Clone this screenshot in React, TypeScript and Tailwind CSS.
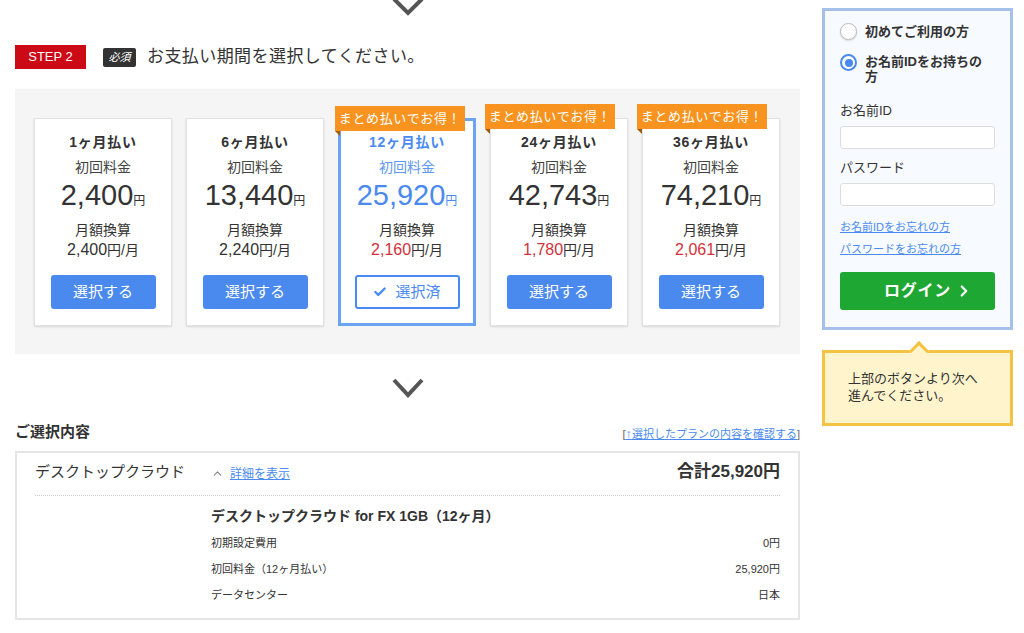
import { Check, ChevronRight, ChevronUp } from 'lucide-react';

type Plan = {
  title: string;
  price: string;
  monthly: string;
  promo?: boolean;
  selected?: boolean;
};

const plans: Plan[] = [
  { title: '1ヶ月払い', price: '2,400', monthly: '2,400' },
  { title: '6ヶ月払い', price: '13,440', monthly: '2,240' },
  { title: '12ヶ月払い', price: '25,920', monthly: '2,160', promo: true, selected: true },
  { title: '24ヶ月払い', price: '42,743', monthly: '1,780', promo: true },
  { title: '36ヶ月払い', price: '74,210', monthly: '2,061', promo: true },
];

function DownArrow({ cut }: { cut?: boolean }) {
  return (
    <div className="flex justify-center">
      <svg width="32" height={cut ? 16 : 20} viewBox={cut ? '0 0 32 16' : '0 0 32 20'}>
        <polyline
          points={cut ? '2,-1 16,13 30,-1' : '2,2 16,17 30,2'}
          fill="none"
          stroke="#555"
          strokeWidth="4"
        />
      </svg>
    </div>
  );
}

function PlanCard({ plan }: { plan: Plan }) {
  const sel = plan.selected;
  return (
    <div
      className={
        'relative w-[138px] h-[208px] bg-white flex flex-col items-center ' +
        (sel
          ? 'border-[3px] border-[#6ba3f3] pt-[11px]'
          : 'border border-[#e2e2e2] shadow-[0_1px_2px_rgba(0,0,0,0.12)] pt-[13px]')
      }
    >
      {plan.promo && (
        <div className="absolute top-[-15px] left-[-6px]">
          <div className="w-[130px] h-[25px] bg-[#f7931e] text-white text-[13px] leading-[25px] text-center tracking-wider">
            まとめ払いでお得！
          </div>
          <div className="w-0 h-0 border-t-[5px] border-t-[#a35a08] border-l-[5px] border-l-transparent" />
        </div>
      )}
      <div className={'text-[14px] leading-5 font-bold tracking-wider ' + (sel ? 'text-[#4a8af0]' : 'text-[#333]')}>
        {plan.title}
      </div>
      <div className={'mt-[5px] text-[14px] leading-5 ' + (sel ? 'text-[#5e98f2]' : 'text-[#444]')}>初回料金</div>
      <div className={'mt-[2px] leading-[32px] ' + (sel ? 'text-[#4a8af0]' : 'text-[#333]')}>
        <span className="text-[29px]">{plan.price}</span>
        <span className="text-[12px]">円</span>
      </div>
      <div className="mt-[3px] text-[14px] leading-5 text-[#333]">月額換算</div>
      <div className="text-[#333] leading-5">
        <span className={'text-[16px] ' + (sel || plan.promo ? 'text-[#d2323c]' : '')}>{plan.monthly}</span>
        <span className="text-[14px]">円/月</span>
      </div>
      {sel ? (
        <button className="mt-[15px] w-[105px] h-[34px] rounded-[3px] border-2 border-[#4a8af0] bg-white text-[#4a8af0] text-[15px] flex items-center justify-center gap-2">
          <Check size={14} strokeWidth={4} />
          選択済
        </button>
      ) : (
        <button className="mt-[15px] w-[105px] h-[34px] rounded-[3px] bg-[#4a89ee] text-white text-[15px]">選択する</button>
      )}
    </div>
  );
}

export default function App() {
  return (
    <div
      className="w-[1024px] h-[633px] overflow-hidden bg-white flex gap-[22px] pl-[15px] text-[#333]"
      style={{ fontFamily: '"Liberation Sans", "Noto Sans CJK JP", sans-serif' }}
    >
      {/* main column */}
      <div className="w-[785px] flex flex-col">
        <DownArrow cut />
        <div className="mt-[29px] flex items-center h-[24px]">
          <div className="w-[71px] h-[24px] bg-[#cc0a16] text-white text-[13px] leading-[24px] text-center">STEP 2</div>
          <div className="ml-[17px] w-[33px] h-[19px] bg-[#333] text-white text-[11px] leading-[19px] text-center rounded-[2px] italic">
            必須
          </div>
          <div className="ml-[11px] text-[17px] tracking-wide text-[#333]">お支払い期間を選択してください。</div>
        </div>
        <div className="mt-[20px] h-[265px] bg-[#f5f5f5] pl-[19px] pt-[29px] flex gap-[14px]">
          {plans.map(p => (
            <PlanCard key={p.title} plan={p} />
          ))}
        </div>
        <div className="mt-[24px]">
          <DownArrow />
        </div>
        <div className="mt-[24px] flex items-end justify-between">
          <div className="text-[15px] font-bold leading-5">ご選択内容</div>
          <div className="text-[11px] leading-4 text-[#666]">
            [<span className="text-[#4a8af0] underline"><span className="text-[13px]">↑</span>選択したプランの内容を確認する</span>]
          </div>
        </div>
        <div className="mt-[9px] h-[169px] border-2 border-[#e6e6e6] px-[18px] pt-[7px]">
          <div className="flex items-center h-[24px]">
            <div className="w-[176px] text-[15px] text-[#333]">デスクトップクラウド</div>
            <div className="flex items-center gap-[6px] text-[12px] mt-[3px]">
              <ChevronUp size={13} className="text-[#888]" />
              <span className="text-[#4a8af0] underline">詳細を表示</span>
            </div>
            <div className="ml-auto text-[17px] font-bold">合計25,920円</div>
          </div>
          <div className="mt-[11px] border-t border-dotted border-[#ccc]" />
          <div className="pl-[176px]">
            <div className="mt-[10px] text-[14px] font-bold leading-5">デスクトップクラウド for FX 1GB（12ヶ月）</div>
            <div className="mt-[4px] flex justify-between text-[11px] leading-[26px]">
              <span>初期設定費用</span>
              <span>0円</span>
            </div>
            <div className="flex justify-between text-[11px] leading-[26px]">
              <span>初回料金（12ヶ月払い）</span>
              <span>25,920円</span>
            </div>
            <div className="flex justify-between text-[11px] leading-[26px]">
              <span>データセンター</span>
              <span>日本</span>
            </div>
          </div>
        </div>
      </div>

      {/* side column */}
      <div className="w-[191px] pt-[8px] flex flex-col">
        <div className="border-[3px] border-[#a6c0ea] bg-[#f7faff] px-[15px] pt-[12px] pb-[17px]">
          <label className="flex items-start gap-[8px]">
            <span className="w-[17px] h-[17px] rounded-full border border-[#bbb] bg-white shadow-[0_1px_2px_rgba(0,0,0,0.15)] shrink-0" />
            <span className="text-[13px] font-bold leading-[17px]">初めてご利用の方</span>
          </label>
          <label className="mt-[14px] flex items-start gap-[8px]">
            <span className="w-[17px] h-[17px] rounded-full border-2 border-[#4a8af0] bg-white flex items-center justify-center shrink-0">
              <span className="w-[8px] h-[8px] rounded-full bg-[#4a8af0]" />
            </span>
            <span className="text-[13px] font-bold leading-[15px]">
              お名前IDをお持ちの
              <br />方
            </span>
          </label>
          <div className="mt-[17px] text-[13px] leading-5">お名前ID</div>
          <input className="mt-[5px] w-full h-[23px] bg-white border border-[#ddd] rounded-[3px]" />
          <div className="mt-[8px] text-[13px] leading-5">パスワード</div>
          <input className="mt-[5px] w-full h-[23px] bg-white border border-[#ddd] rounded-[3px]" />
          <div className="mt-[13px] text-[11px] leading-4 text-[#4a8af0] underline">お名前IDをお忘れの方</div>
          <div className="mt-[6px] text-[11px] leading-4 text-[#4a8af0] underline">パスワードをお忘れの方</div>
          <button className="relative mt-[15px] w-full h-[38px] rounded-[3px] bg-[#1fa733] text-white text-[16px] font-bold tracking-wider">
            ログイン
            <ChevronRight size={18} strokeWidth={3} className="absolute right-[22px] top-[10px]" />
          </button>
        </div>
        <div className="relative mt-[20px] border-[3px] border-[#f5c343] bg-[#fff4cb] px-[23px] pt-[17px] pb-[19px] text-[13px] leading-[17px]">
          <div className="absolute top-[-9px] left-[87px] w-[14px] h-[14px] rotate-45 bg-[#fff4cb] border-t-[3px] border-l-[3px] border-[#f5c343]" />
          上部のボタンより次へ
          <br />
          進んでください。
        </div>
      </div>
    </div>
  );
}
